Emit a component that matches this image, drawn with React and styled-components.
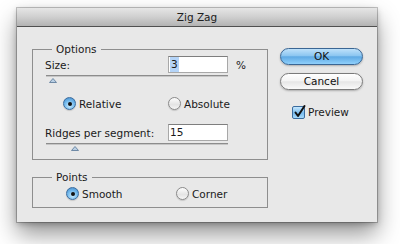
import React from 'react';
import styled, { createGlobalStyle } from 'styled-components';

const GlobalStyle = createGlobalStyle`
  html, body {
    margin: 0;
    padding: 0;
    background: #ffffff;
    width: 400px;
    height: 244px;
    overflow: hidden;
  }
  body {
    font-family: "DejaVu Sans", "Liberation Sans", sans-serif;
    font-size: 10.5px;
    color: #1a1a1a;
  }
`;

const Window = styled.div`
  margin: 8px 0 0 17px;
  width: 360px;
  height: 214px;
  background: #e8e8e8;
  display: flex;
  flex-direction: column;
  box-shadow: 0 0 0 1px rgba(0, 0, 0, 0.22), 0 12px 22px rgba(0, 0, 0, 0.42),
    0 2px 6px rgba(0, 0, 0, 0.25);
`;

const TitleBar = styled.div`
  height: 18px;
  border-bottom: 1px solid #505050;
  background: linear-gradient(#e6e6e6, #cfcfcf 50%, #b3b3b3);
  display: flex;
  align-items: center;
  justify-content: center;
  color: #202020;
  line-height: 18px;
`;

const Body = styled.div`
  flex: 1;
  display: flex;
  padding: 15px 0 0 15px;
`;

const LeftColumn = styled.div`
  width: 236px;
  display: flex;
  flex-direction: column;
`;

const Group = styled.fieldset`
  margin: ${(p) => p.$top || 0}px 0 0 0;
  padding: 0 12px ${(p) => p.$bottom || 7}px 12px;
  border: 1px solid #8e8e8e;
  min-width: 0;
`;

const Legend = styled.legend`
  margin-left: 7px;
  padding: 0 4px;
  line-height: 14px;
  height: 14px;
  font-size: 10.5px;
  color: #1a1a1a;
`;

const FieldRow = styled.div`
  display: grid;
  grid-template-columns: 123px 60px auto;
  align-items: center;
  height: 17px;
  margin-top: ${(p) => p.$top || 0}px;
`;

const FieldLabel = styled.span`
  white-space: nowrap;
`;

const TextBox = styled.div`
  height: 15px;
  background: #ffffff;
  border: 1px solid #a8a8a8;
  border-top-color: #7e7e7e;
  display: flex;
  align-items: center;
  padding-left: 1px;
  line-height: 15px;
`;

const Selected = styled.span`
  background: #b4d4f8;
  padding: 0 1px;
`;

const Unit = styled.span`
  margin-left: 8px;
`;

const SliderWrap = styled.div`
  margin: ${(p) => p.$top || 2}px 0 0 1px;
  height: 9px;
  line-height: 0;
`;

const RadioRow = styled.div`
  display: grid;
  grid-template-columns: ${(p) => p.$col}px auto;
  padding-left: ${(p) => p.$indent}px;
  margin-top: ${(p) => p.$top}px;
  height: 13px;
  align-items: center;
`;

const RadioItem = styled.label`
  display: flex;
  align-items: center;
  gap: 3px;
  white-space: nowrap;
`;

const RadioDot = styled.span`
  width: 11px;
  height: 11px;
  border-radius: 50%;
  flex: none;
  display: flex;
  align-items: center;
  justify-content: center;
  border: 1px solid ${(p) => (p.$on ? '#3b6c9e' : '#8a8a8a')};
  background: ${(p) =>
    p.$on
      ? 'radial-gradient(circle at 50% 70%, #c9ecff 0%, #6fb6ea 55%, #3f86c8 100%)'
      : 'linear-gradient(#fdfdfd, #e4e4e4 60%, #f6f6f6)'};
  box-shadow: 0 1px 1px rgba(0, 0, 0, 0.15);

  &::after {
    content: '';
    width: 4px;
    height: 4px;
    border-radius: 50%;
    background: #111;
    display: ${(p) => (p.$on ? 'block' : 'none')};
  }
`;

const RightColumn = styled.div`
  width: 83px;
  margin-left: 12px;
  padding-top: 6px;
  display: flex;
  flex-direction: column;
`;

const PillButton = styled.button`
  width: 83px;
  height: 17px;
  margin: 0 0 ${(p) => p.$after || 0}px 0;
  padding: 0;
  border-radius: 9px;
  font-family: "DejaVu Sans", sans-serif;
  font-size: 10.5px;
  color: #111;
  line-height: 15px;
  border: 1px solid ${(p) => (p.$primary ? '#3a6694' : '#7a7a7a')};
  background: ${(p) =>
    p.$primary
      ? 'linear-gradient(#bfe1fa 0%, #8cc6f1 45%, #5fa9e4 52%, #8fd0fb 100%)'
      : 'linear-gradient(#ffffff 0%, #f4f4f4 45%, #e6e6e6 52%, #fafafa 100%)'};
  box-shadow: 0 1px 2px rgba(0, 0, 0, 0.25);
`;

const CheckRow = styled.label`
  display: flex;
  align-items: center;
  gap: 3px;
  margin: 16px 0 0 12px;
  height: 12px;
`;

const CheckBox = styled.span`
  width: 11px;
  height: 11px;
  flex: none;
  border: 1px solid #3b6c9e;
  border-radius: 2px;
  background: linear-gradient(#c6e7fd, #78bbee 55%, #a7dafc);
  position: relative;
  line-height: 0;

  svg {
    position: absolute;
    left: 0;
    top: -3px;
  }
`;

const Slider = ({ thumb }) => (
  <SliderWrap>
    <svg width="182" height="9" viewBox="0 0 182 9">
      <rect x="0" y="0" width="182" height="1" fill="#8c8c8c" />
      <rect x="0" y="1" width="182" height="1" fill="#c6c6c6" />
      <polygon
        points={`${thumb - 3.5},7.5 ${thumb + 3.5},7.5 ${thumb},3.5`}
        fill="#b9cfe4"
        stroke="#6f8aa6"
        strokeWidth="1"
        strokeLinejoin="round"
      />
    </svg>
  </SliderWrap>
);

const Radio = ({ on, children }) => (
  <RadioItem>
    <RadioDot $on={on} />
    {children}
  </RadioItem>
);

const App = () => (
  <>
    <GlobalStyle />
    <Window>
      <TitleBar>Zig Zag</TitleBar>
      <Body>
        <LeftColumn>
          <Group $bottom={7}>
            <Legend>Options</Legend>
            <FieldRow>
              <FieldLabel>Size:</FieldLabel>
              <TextBox>
                <Selected>3</Selected>
              </TextBox>
              <Unit>%</Unit>
            </FieldRow>
            <Slider thumb={7} />
            <RadioRow $indent={18} $col={105} $top={13}>
              <Radio on>Relative</Radio>
              <Radio>Absolute</Radio>
            </RadioRow>
            <FieldRow $top={14}>
              <FieldLabel>Ridges per segment:</FieldLabel>
              <TextBox>15</TextBox>
            </FieldRow>
            <Slider thumb={29} />
          </Group>
          <Group $top={10} $bottom={7}>
            <Legend>Points</Legend>
            <RadioRow $indent={21} $col={110} $top={3}>
              <Radio on>Smooth</Radio>
              <Radio>Corner</Radio>
            </RadioRow>
          </Group>
        </LeftColumn>
        <RightColumn>
          <PillButton $primary $after={8}>OK</PillButton>
          <PillButton>Cancel</PillButton>
          <CheckRow>
            <CheckBox>
              <svg width="13" height="14" viewBox="0 0 13 14">
                <path
                  d="M2.5 8.5 L5 12 L11.5 2"
                  fill="none"
                  stroke="#111"
                  strokeWidth="2"
                  strokeLinecap="round"
                  strokeLinejoin="round"
                />
              </svg>
            </CheckBox>
            Preview
          </CheckRow>
        </RightColumn>
      </Body>
    </Window>
  </>
);

export default App;
